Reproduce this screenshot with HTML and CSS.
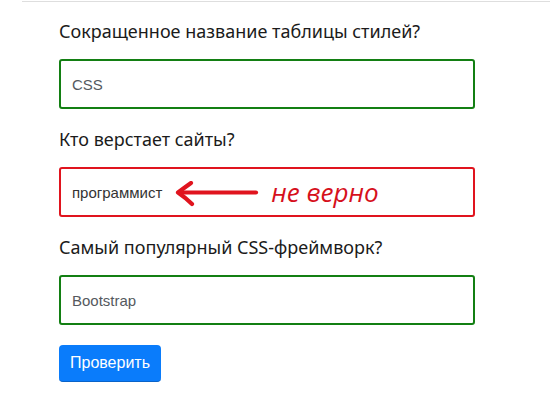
FILE: index.html
```html
<!DOCTYPE html>
<html lang="ru">
<head>
<meta charset="utf-8">
<title>Тест</title>
<link rel="stylesheet" href="styles.css">
</head>
<body>
<div class="topline"></div>
<form class="quiz">
  <div class="group">
    <label class="question">Сокращенное название таблицы стилей?</label>
    <div class="field field-ok">CSS</div>
  </div>
  <div class="group">
    <label class="question">Кто верстает сайты?</label>
    <div class="field field-bad">
      <span class="value">программист</span>
      <svg class="arrow" width="84" height="28" viewBox="0 0 84 28">
        <path d="M81 11.5 L4 11.5" fill="none" stroke="#e0141e" stroke-width="4.2" stroke-linecap="round"/>
        <path d="M16 2 Q9 7 3 11.5 Q11 17 17 23" fill="none" stroke="#e0141e" stroke-width="4.2" stroke-linecap="round" stroke-linejoin="round"/>
      </svg>
      <span class="note">не верно</span>
    </div>
  </div>
  <div class="group">
    <label class="question">Самый популярный CSS-фреймворк?</label>
    <div class="field field-ok">Bootstrap</div>
  </div>
  <button type="button" class="btn">Проверить</button>
</form>
</body>
</html>
```
FILE: styles.css
```css
html, body {
  margin: 0;
  padding: 0;
  background: #ffffff;
}

.topline {
  margin: 1px 0 0 22px;
  border-top: 1px solid #dedede;
}

.quiz {
  display: flex;
  flex-direction: column;
  padding: 17px 0 0 59px;
  width: 416px;
}

.group {
  display: flex;
  flex-direction: column;
  gap: 16px;
  margin-bottom: 18px;
}

.question {
  font-family: "Noto Sans", "DejaVu Sans", sans-serif;
  font-size: 18px;
  line-height: 24px;
  color: #1b1b1b;
}

.field {
  box-sizing: border-box;
  height: 50px;
  border: 2px solid #137f13;
  border-radius: 3px;
  padding: 0 11px;
  display: flex;
  align-items: center;
  font-family: "Liberation Sans", Arial, sans-serif;
  font-size: 15px;
  color: #55595e;
}

.field-bad {
  border-color: #e0141e;
  color: #333;
}

.arrow {
  margin-left: 13px;
  margin-top: 5px;
}

.note {
  margin-left: 12px;
  font-family: "Open Sans", sans-serif;
  font-style: italic;
  font-size: 26px;
  color: #d6101c;
  line-height: 1;
  margin-top: -1px;
}

.btn {
  align-self: flex-start;
  margin-top: 2px;
  width: 102px;
  height: 37px;
  border: none;
  border-bottom: 1px solid #0a63c8;
  border-radius: 4px;
  background: #0a7cfb;
  color: #ffffff;
  font-family: "Liberation Sans", Arial, sans-serif;
  font-size: 16px;
  padding: 0;
}
```
